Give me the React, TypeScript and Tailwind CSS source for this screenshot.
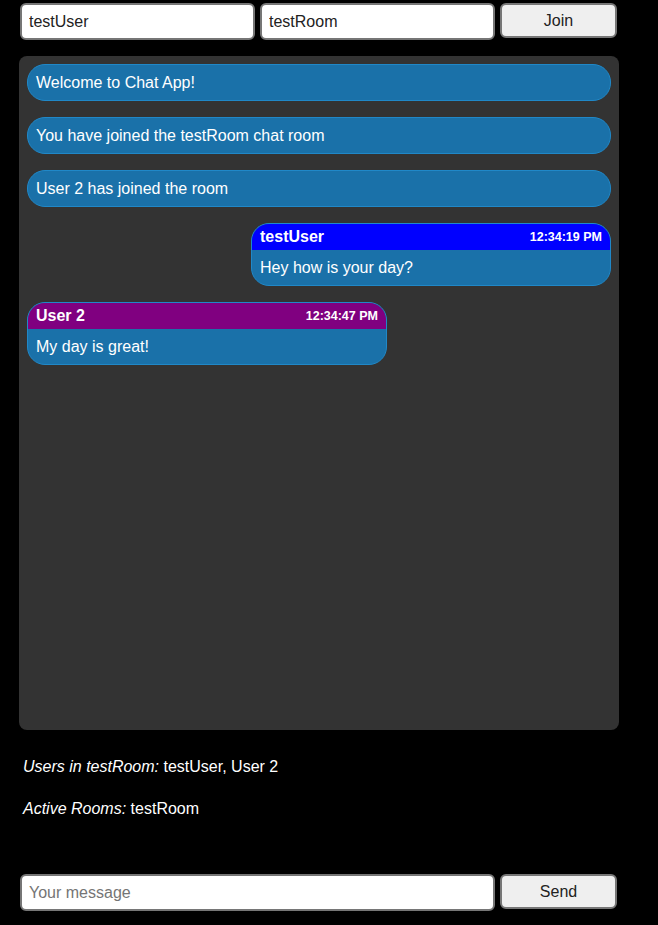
import { useState } from "react";

type Msg =
  | { kind: "system"; text: string }
  | { kind: "chat"; user: string; time: string; text: string; mine: boolean };

const messages: Msg[] = [
  { kind: "system", text: "Welcome to Chat App!" },
  { kind: "system", text: "You have joined the testRoom chat room" },
  { kind: "system", text: "User 2 has joined the room" },
  { kind: "chat", user: "testUser", time: "12:34:19 PM", text: "Hey how is your day?", mine: true },
  { kind: "chat", user: "User 2", time: "12:34:47 PM", text: "My day is great!", mine: false },
];

export default function App() {
  const [name, setName] = useState("testUser");
  const [room, setRoom] = useState("testRoom");
  const [draft, setDraft] = useState("");

  return (
    <div className="min-h-[925px] bg-black text-white font-['Liberation_Sans',Arial,sans-serif] text-base pt-[3px] pl-[19px]">
      <div className="w-[600px]">
        {/* join bar */}
        <div className="flex gap-[5px] pl-px">
          <input
            value={name}
            onChange={(e) => setName(e.target.value)}
            className="w-[235px] h-[37px] bg-white text-[#222] rounded-[6px] border-2 border-[#767676] pl-[7px] outline-none"
          />
          <input
            value={room}
            onChange={(e) => setRoom(e.target.value)}
            className="w-[235px] h-[37px] bg-white text-[#222] rounded-[6px] border-2 border-[#767676] pl-[7px] outline-none"
          />
          <button className="w-[117px] h-[35px] bg-[#efefef] text-[#222] rounded-[6px] border-2 border-[#767676]">
            Join
          </button>
        </div>

        {/* chat window */}
        <div className="mt-[16px] h-[674px] bg-[#333333] rounded-[8px] p-[8px] flex flex-col gap-[16px]">
          {messages.map((m, i) =>
            m.kind === "system" ? (
              <div
                key={i}
                className="bg-[#1a71a9] border border-[#2088c8] rounded-[18px] px-[8px] py-[8px] leading-[19px]"
              >
                {m.text}
              </div>
            ) : (
              <div
                key={i}
                className={`w-[360px] overflow-hidden rounded-[18px] border border-[#2088c8] bg-[#1a71a9] ${
                  m.mine ? "self-end" : "self-start"
                }`}
              >
                <div
                  className={`flex items-center justify-between h-[26px] px-[8px] ${
                    m.mine ? "bg-[#0000ff]" : "bg-[#800080]"
                  }`}
                >
                  <span className="font-bold">{m.user}</span>
                  <span className="font-bold text-[12.5px]">{m.time}</span>
                </div>
                <div className="px-[8px] py-[8px] leading-[19px]">{m.text}</div>
              </div>
            )
          )}
        </div>

        {/* info */}
        <p className="mt-[28px] ml-[4px] leading-[18px]">
          <em>Users in testRoom:</em> testUser, User 2
        </p>
        <p className="mt-[24px] ml-[4px] leading-[18px]">
          <em>Active Rooms:</em> testRoom
        </p>

        {/* send bar */}
        <div className="mt-[56px] flex gap-[5px] pl-px">
          <input
            value={draft}
            onChange={(e) => setDraft(e.target.value)}
            placeholder="Your message"
            className="w-[475px] h-[37px] bg-white text-[#222] placeholder:text-[#757575] rounded-[6px] border-2 border-[#767676] pl-[7px] outline-none"
          />
          <button className="w-[117px] h-[35px] bg-[#efefef] text-[#222] rounded-[6px] border-2 border-[#767676]">
            Send
          </button>
        </div>
      </div>
    </div>
  );
}
